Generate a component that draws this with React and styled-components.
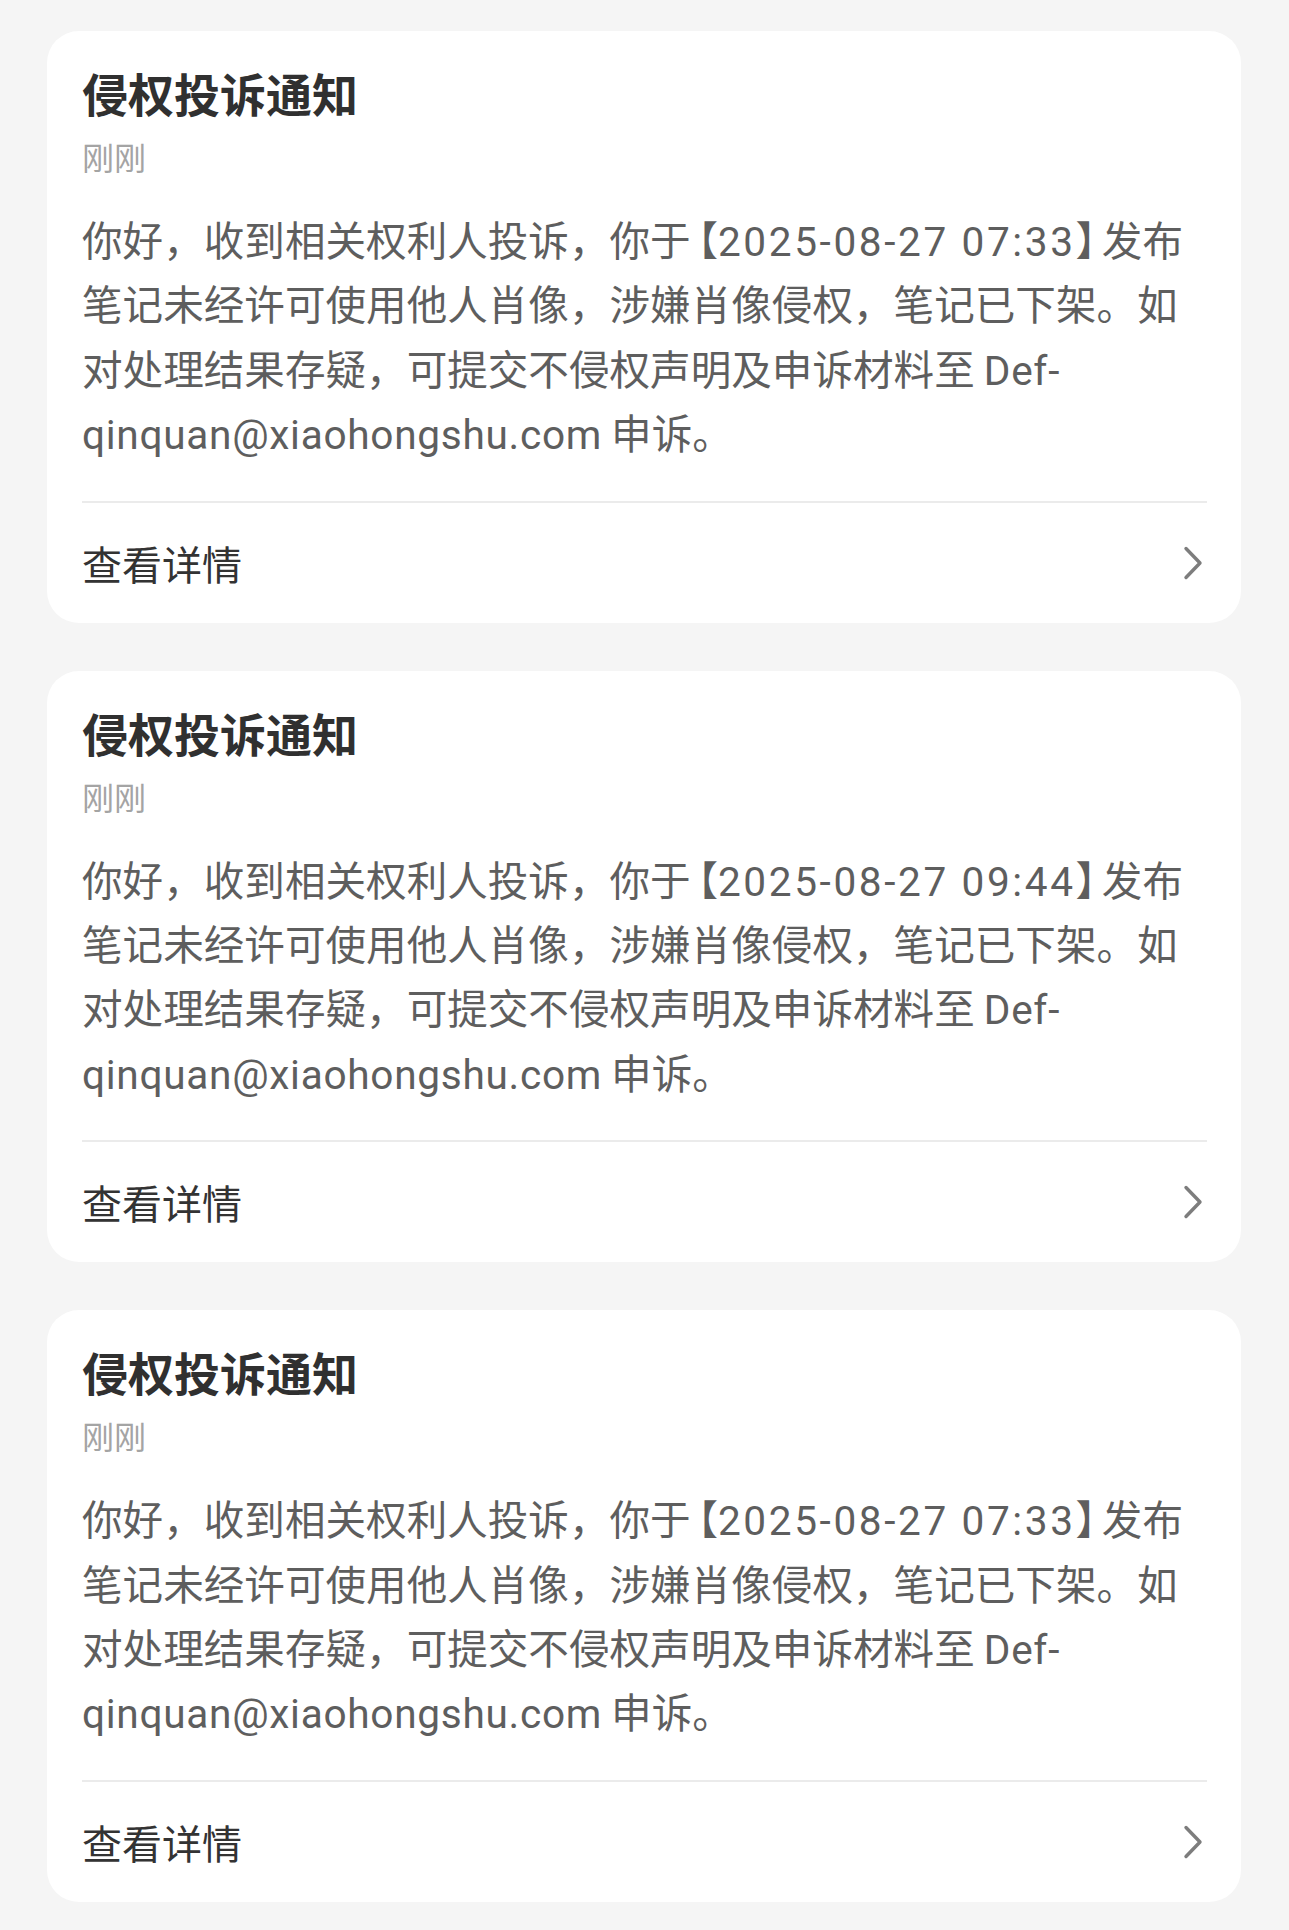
import React from "react";
import styled, { createGlobalStyle } from "styled-components";

const Global = createGlobalStyle`
  html, body {
    margin: 0;
    padding: 0;
    background: #f5f5f5;
  }
  body {
    font-family: Roboto, "Noto Sans CJK SC", "Noto Sans", sans-serif;
    -webkit-font-smoothing: antialiased;
  }
`;

const Page = styled.div`
  display: flex;
  flex-direction: column;
  gap: 48px;
  padding: 31px 48px 30px 47px;
  min-height: 1930px;
  box-sizing: border-box;
`;

const Card = styled.section`
  background: #ffffff;
  border-radius: 32px;
  padding: 33px 34px 0 35px;
  display: flex;
  flex-direction: column;
`;

const Title = styled.h2`
  margin: 0;
  font-size: 46px;
  line-height: 56px;
  font-weight: 600;
  color: #303030;
  font-family: "Noto Sans CJK SC", sans-serif;
`;

const Meta = styled.div`
  margin-top: 16px;
  font-size: 32px;
  line-height: 40px;
  color: #a4a4a4;
  font-family: "Noto Sans CJK SC", sans-serif;
`;

const Body = styled.p`
  margin: 31px 0 0;
  font-size: 40.6px;
  line-height: 64.4px;
  color: #5e5e5e;
  font-family: "Noto Sans CJK SC", sans-serif;
`;

const Latin = styled.span`
  font-family: Roboto, "Noto Sans CJK SC", sans-serif;
  letter-spacing: ${(p) => p.$spacing}px;
  line-height: 1;
`;

const Bracket = styled.span`
  font-family: "Noto Sans CJK SC", sans-serif;
  font-feature-settings: "halt";
  margin-left: ${(p) => (p.$open ? 7 : 0)}px;
  margin-right: ${(p) => (p.$open ? 0 : 6)}px;
`;

const Divider = styled.hr`
  margin: 36px 0 0;
  border: none;
  height: 2px;
  background: #ebebeb;
`;

const Footer = styled.div`
  height: 120px;
  display: flex;
  align-items: center;
  justify-content: space-between;
  padding-right: 4px;
`;

const LinkText = styled.span`
  font-size: 40px;
  line-height: 48px;
  color: #333333;
  font-family: "Noto Sans CJK SC", sans-serif;
`;

const Chevron = () => (
  <svg width="20" height="34" viewBox="0 0 20 34" fill="none">
    <path
      d="M3 2.5 L17 17 L3 31.5"
      stroke="#7d7d7d"
      strokeWidth="3.4"
      strokeLinecap="round"
      strokeLinejoin="round"
    />
  </svg>
);

const notices = [
  { time: "2025-08-27 07:33" },
  { time: "2025-08-27 09:44" },
  { time: "2025-08-27 07:33" },
];

function NoticeCard({ time }) {
  return (
    <Card>
      <Title>侵权投诉通知</Title>
      <Meta>刚刚</Meta>
      <Body>
        你好，收到相关权利人投诉，你于<Bracket $open>【</Bracket>
        <Latin $spacing={2.6}>{time}</Latin>
        <Bracket>】</Bracket>发布笔记未经许可使用他人肖像，涉嫌肖像侵权，笔记已下架。如对处理结果存疑，可提交不侵权声明及申诉材料至{" "}
        <Latin $spacing={0.7}>Def-qinquan@xiaohongshu.com</Latin> 申诉。
      </Body>
      <Divider />
      <Footer>
        <LinkText>查看详情</LinkText>
        <Chevron />
      </Footer>
    </Card>
  );
}

export default function App() {
  return (
    <>
      <Global />
      <Page>
        {notices.map((n, i) => (
          <NoticeCard key={i} time={n.time} />
        ))}
      </Page>
    </>
  );
}
